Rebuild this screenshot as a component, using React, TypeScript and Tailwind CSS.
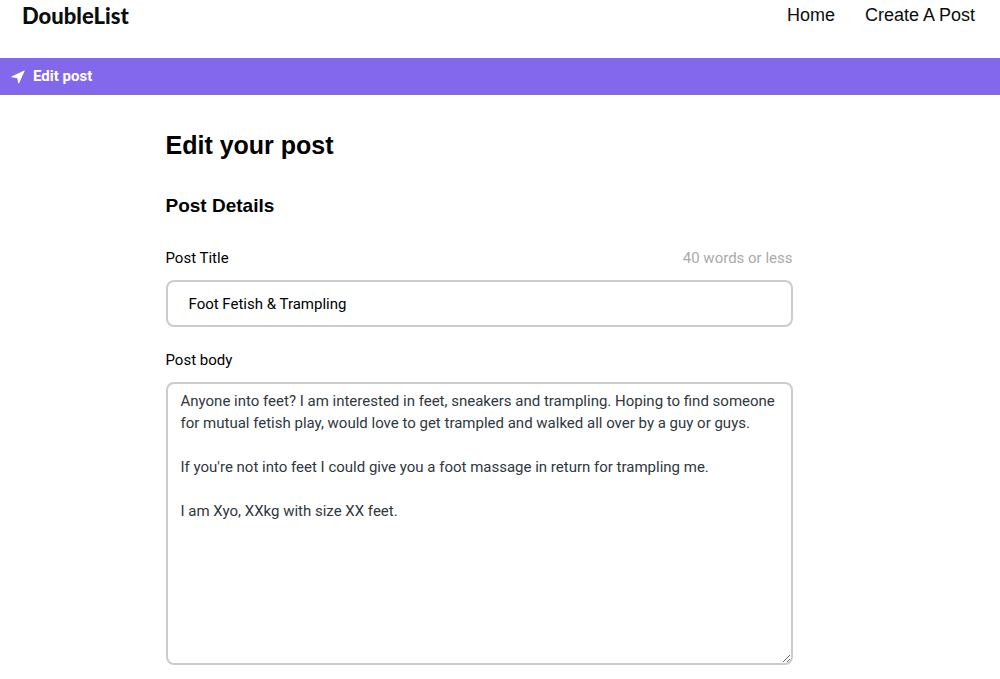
export default function App() {
  return (
    <div className="bg-white font-['Roboto',sans-serif] text-black">
      <header className="flex h-[58px] items-start justify-between pr-[25px] pl-[22px]">
        <a href="#" className="pt-1 font-['Lato',sans-serif] text-[22px] leading-6 font-black text-[#0a0d0d]">DoubleList</a>
        <nav className="flex gap-[30px] pt-[3px] font-['Liberation_Sans',sans-serif] text-[18px] leading-6 text-[#0a0d0d]">
          <a href="#">Home</a>
          <a href="#">Create A Post</a>
        </nav>
      </header>
      <div className="flex h-[37px] items-center gap-2 bg-[#8468ec] pl-[11px] text-[15px] font-bold text-white">
        <svg viewBox="0 0 14 14" className="size-[14px]" fill="currentColor" aria-hidden="true">
          <path d="M13.3 0.6 Q13.8 0.4 13.6 0.9 L8.2 13.1 Q7.7 13.8 7.2 13 L6.3 8.2 L0.8 7.3 Q0 6.9 0.6 6.4 Z" />
        </svg>
        <span>Edit post</span>
      </div>
      <div className="px-4 sm:pr-[58px]">
        <main className="mx-auto w-full max-w-[627px] pt-[34px] pb-[14px]">
          <h1 className="font-['Liberation_Sans',sans-serif] text-[25px] leading-8 font-bold">Edit your post</h1>
          <h2 className="mt-[33px] font-['Liberation_Sans',sans-serif] text-[19px] leading-6 font-bold">Post Details</h2>
          <form>
            <div className="mt-[30px] flex items-center justify-between text-[15px] leading-5">
              <label htmlFor="title">Post Title</label>
              <span className="text-[#aaaaaa]">40 words or less</span>
            </div>
            <input id="title" defaultValue="Foot Fetish & Trampling" className="mt-3 block h-[47px] w-full rounded-lg border-2 border-[#cccccc] px-[21px] text-[15px]" />
            <label htmlFor="body" className="mt-[23px] block text-[15px] leading-5">Post body</label>
            <textarea
              id="body"
              className="mt-3 block h-[283px] w-full resize-y rounded-lg border-2 border-[#cccccc] py-[6px] pr-[11px] pl-[13px] text-[15px] leading-[22px] text-[#2f3740]"
              defaultValue={"Anyone into feet? I am interested in feet, sneakers and trampling. Hoping to find someone for mutual fetish play, would love to get trampled and walked all over by a guy or guys.\n\nIf you're not into feet I could give you a foot massage in return for trampling me.\n\nI am Xyo, XXkg with size XX feet."}
            />
          </form>
        </main>
      </div>
    </div>
  );
}
